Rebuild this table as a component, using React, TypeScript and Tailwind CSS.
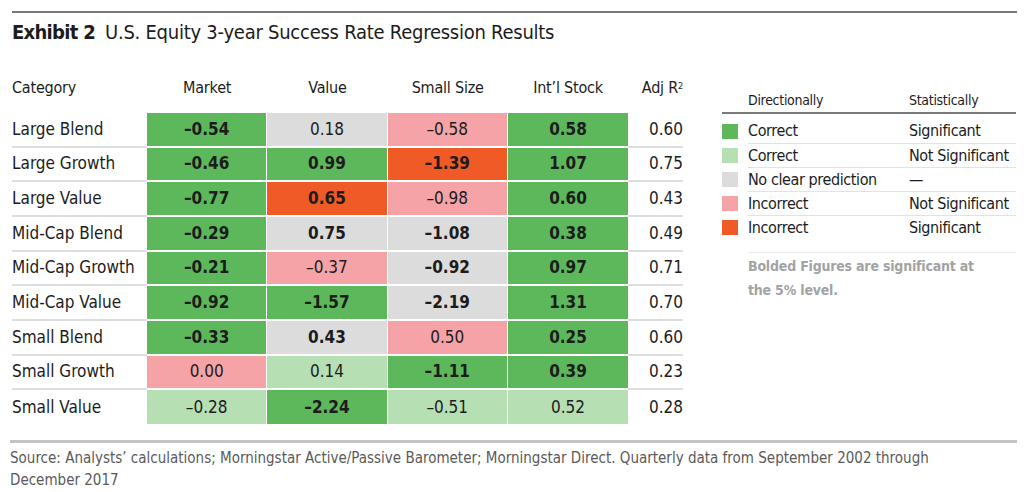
const FONT = 'font-["Liberation_Sans_Narrow","DejaVu_Sans_Condensed",Roboto,sans-serif]';

type Tone = 'dg' | 'lg' | 'gy' | 'pk' | 'or';

const toneBg: Record<Tone, string> = {
  dg: 'bg-[#5cb85b]',
  lg: 'bg-[#b6dfb3]',
  gy: 'bg-[#dcdcdc]',
  pk: 'bg-[#f5a3a6]',
  or: 'bg-[#ef5a27]',
};

interface Cell {
  v: string;
  t: Tone;
  b?: boolean;
}

interface Row {
  name: string;
  cells: Cell[];
  r2: string;
}

const rows: Row[] = [
  { name: 'Large Blend', r2: '0.60', cells: [
    { v: '–0.54', t: 'dg', b: true }, { v: '0.18', t: 'gy' }, { v: '–0.58', t: 'pk' }, { v: '0.58', t: 'dg', b: true },
  ] },
  { name: 'Large Growth', r2: '0.75', cells: [
    { v: '–0.46', t: 'dg', b: true }, { v: '0.99', t: 'dg', b: true }, { v: '–1.39', t: 'or', b: true }, { v: '1.07', t: 'dg', b: true },
  ] },
  { name: 'Large Value', r2: '0.43', cells: [
    { v: '–0.77', t: 'dg', b: true }, { v: '0.65', t: 'or', b: true }, { v: '–0.98', t: 'pk' }, { v: '0.60', t: 'dg', b: true },
  ] },
  { name: 'Mid-Cap Blend', r2: '0.49', cells: [
    { v: '–0.29', t: 'dg', b: true }, { v: '0.75', t: 'gy', b: true }, { v: '–1.08', t: 'gy', b: true }, { v: '0.38', t: 'dg', b: true },
  ] },
  { name: 'Mid-Cap Growth', r2: '0.71', cells: [
    { v: '–0.21', t: 'dg', b: true }, { v: '–0.37', t: 'pk' }, { v: '–0.92', t: 'gy', b: true }, { v: '0.97', t: 'dg', b: true },
  ] },
  { name: 'Mid-Cap Value', r2: '0.70', cells: [
    { v: '–0.92', t: 'dg', b: true }, { v: '–1.57', t: 'dg', b: true }, { v: '–2.19', t: 'gy', b: true }, { v: '1.31', t: 'dg', b: true },
  ] },
  { name: 'Small Blend', r2: '0.60', cells: [
    { v: '–0.33', t: 'dg', b: true }, { v: '0.43', t: 'gy', b: true }, { v: '0.50', t: 'pk' }, { v: '0.25', t: 'dg', b: true },
  ] },
  { name: 'Small Growth', r2: '0.23', cells: [
    { v: '0.00', t: 'pk' }, { v: '0.14', t: 'lg' }, { v: '–1.11', t: 'dg', b: true }, { v: '0.39', t: 'dg', b: true },
  ] },
  { name: 'Small Value', r2: '0.28', cells: [
    { v: '–0.28', t: 'lg' }, { v: '–2.24', t: 'dg', b: true }, { v: '–0.51', t: 'lg' }, { v: '0.52', t: 'lg' },
  ] },
];

const legend: { t: Tone; dir: string; stat: string }[] = [
  { t: 'dg', dir: 'Correct', stat: 'Significant' },
  { t: 'lg', dir: 'Correct', stat: 'Not Significant' },
  { t: 'gy', dir: 'No clear prediction', stat: '—' },
  { t: 'pk', dir: 'Incorrect', stat: 'Not Significant' },
  { t: 'or', dir: 'Incorrect', stat: 'Significant' },
];

export default function App() {
  return (
    <div className={`w-[1024px] h-[492px] bg-white text-[#1c1c1c] ${FONT} overflow-hidden`}>
      <div className="ml-[12px] w-[1005px] pt-[11px]">
        <div className="border-t-2 border-[#7a7a7a]" />
        <div className="h-[37px] flex items-center text-[20px] leading-none whitespace-nowrap">
          <span className="font-bold tracking-[-0.7px]">Exhibit 2</span>
          <span className="ml-[10px] tracking-[-0.25px]">U.S. Equity 3-year Success Rate Regression Results</span>
        </div>

        <div className="flex">
          {/* table */}
          <div className="w-[671px] pt-[23px]">
            <div className="flex h-[30px] items-center text-[16px] tracking-[-0.2px] whitespace-nowrap">
              <div className="w-[135px]">Category</div>
              {['Market', 'Value', 'Small Size', "Int’l Stock"].map((h) => (
                <div key={h} className="w-[120.3px] text-center">{h}</div>
              ))}
              <div className="flex-1 text-right">
                Adj R<sup className="text-[9px]">2</sup>
              </div>
            </div>
            <div className="mt-[10px]">
              {rows.map((r, i) => {
                const last = i === rows.length - 1;
                return (
                  <div key={r.name} className="flex h-[34.67px] text-[17px] whitespace-nowrap">
                    <div className={`w-[135px] flex items-center ${last ? '' : 'border-b-2 border-[#dedede]'}`}>
                      {r.name}
                    </div>
                    {r.cells.map((c, j) => (
                      <div
                        key={j}
                        className={`w-[120.3px] ${last ? 'h-[34px]' : 'border-b-2 border-white'} ${j < 3 ? 'border-r border-r-white' : ''} ${toneBg[c.t]} flex items-center justify-center ${c.b ? 'font-bold' : ''}`}
                      >
                        {c.v}
                      </div>
                    ))}
                    <div className={`flex-1 flex items-center justify-end ${last ? '' : 'border-b-2 border-[#dedede]'}`}>
                      {r.r2}
                    </div>
                  </div>
                );
              })}
            </div>
          </div>

          {/* legend */}
          <div className="ml-[39px] w-[294px] pt-[38px] whitespace-nowrap">
            <div className="flex h-[24px] items-center text-[14px] tracking-[-0.3px]">
              <div className="w-[26px]" />
              <div className="w-[161px]">Directionally</div>
              <div>Statistically</div>
            </div>
            <div className="border-t-2 border-[#7a7a7a]" />
            <div className="pt-[5px]">
              {legend.map((l, i) => (
                <div key={i} className="flex h-[24px] items-center text-[16px] tracking-[-0.4px]">
                  <div className={`w-[16px] h-[15px] ${toneBg[l.t]}`} />
                  <div className={`ml-[10px] flex-1 h-full flex items-center ${i > 0 ? 'border-t border-[#e2e2e2]' : ''}`}>
                    <div className="w-[161px]">{l.dir}</div>
                    <div>{l.stat}</div>
                  </div>
                </div>
              ))}
            </div>
            <div className="ml-[26px] mt-[13px] border-t border-[#eaeaea] pt-[1px] text-[14px] tracking-[-0.2px] font-bold text-[#a3a3a3] leading-[24px]">
              Bolded Figures are significant at
              <br />
              the 5% level.
            </div>
          </div>
        </div>

        <div className="mt-[15px] -ml-[2px] border-t-[3px] border-[#c4c4c4]" />
        <div className="-ml-[2px] pt-[4px] text-[15px] leading-[22px] text-[#5a5a5a] whitespace-nowrap">
          Source: Analysts’ calculations; Morningstar Active/Passive Barometer; Morningstar Direct. Quarterly data from September 2002 through
          <br />
          December 2017
        </div>
      </div>
    </div>
  );
}
